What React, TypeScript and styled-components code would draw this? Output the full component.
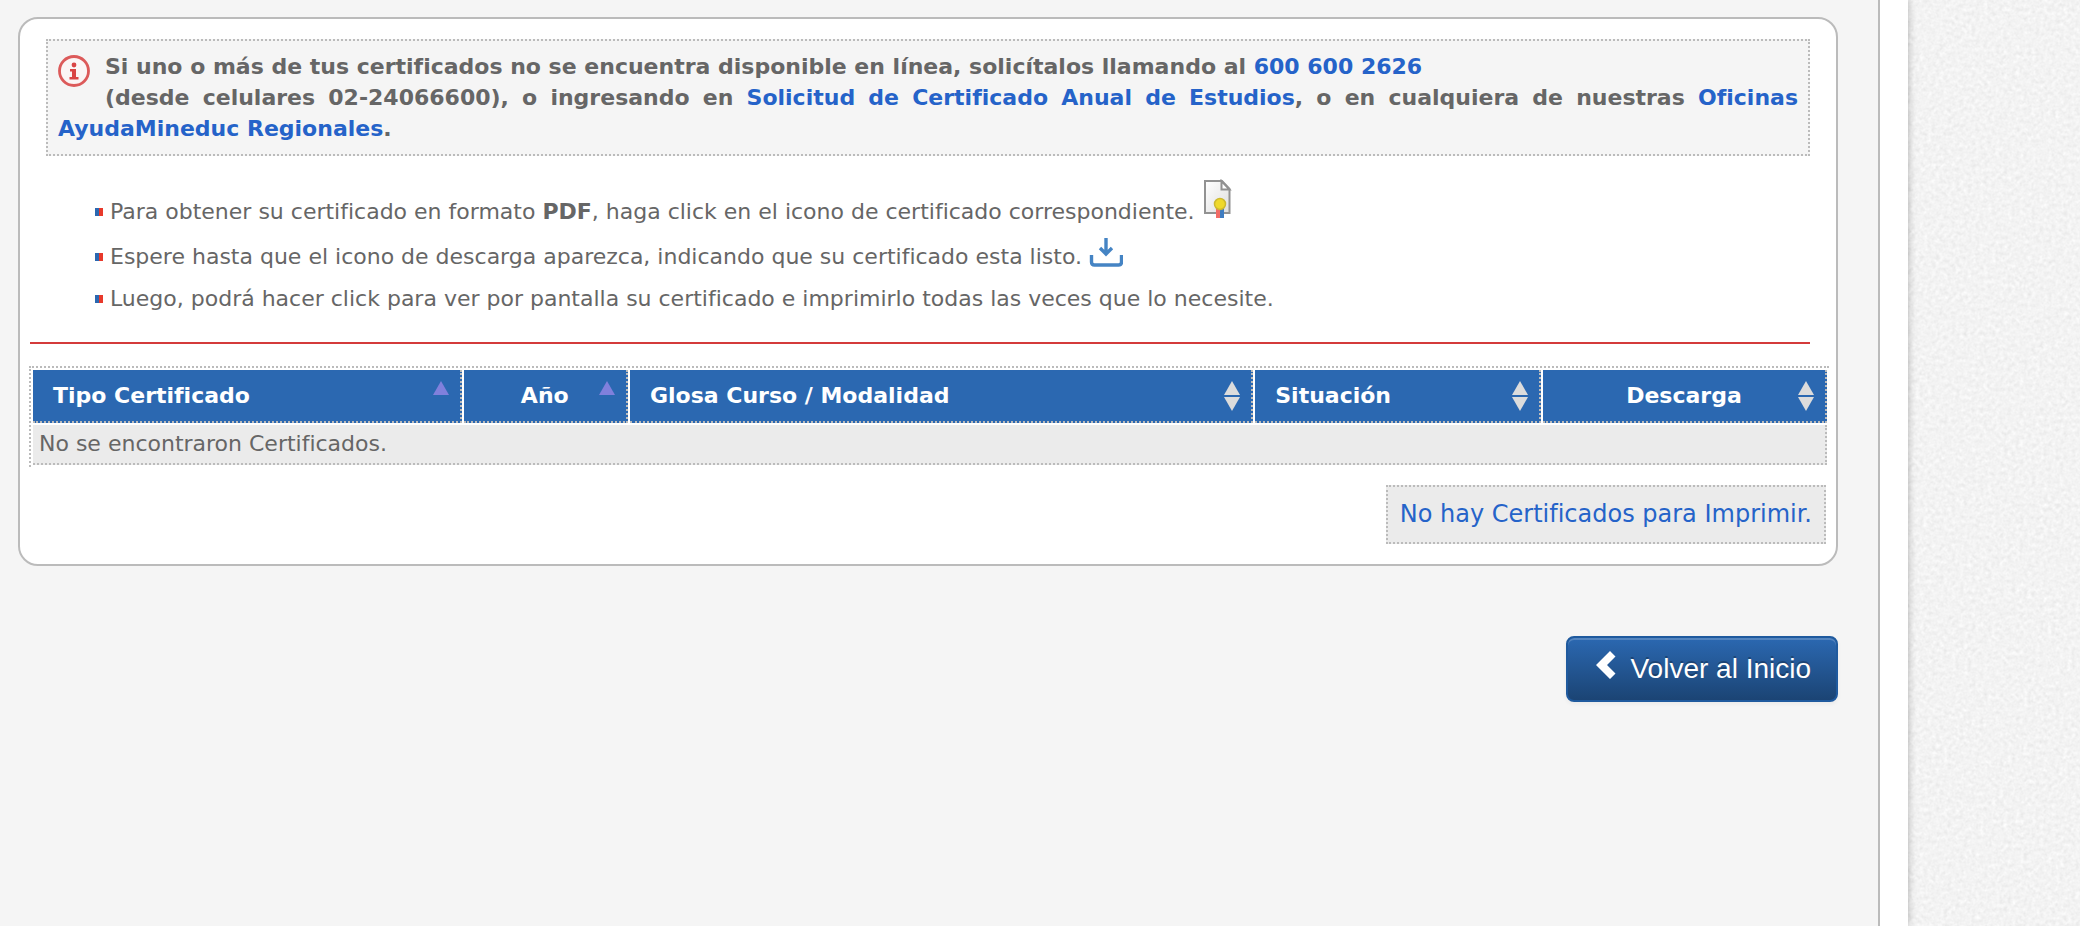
import React from 'react';
import styled, { createGlobalStyle, css } from 'styled-components';

const line = '#bbbbbb';
const ink = '#666666';
const link = '#2563c9';
const sans = 'Verdana, "DejaVu Sans", sans-serif';

const GlobalStyle = createGlobalStyle`
  *, *::before, *::after { box-sizing: border-box; }
  body {
    margin: 0;
    background: #f3f3f3;
    color: ${ink};
    font-family: ${sans};
    font-size: 22px;
    line-height: 31px;
    font-variant-ligatures: none;
  }
`;

const Page = styled.div`
  display: flex;
  min-height: 100vh;
  overflow: hidden;
`;

const Sheet = styled.div`
  position: relative;
  z-index: 1;
  flex: 1;
  min-width: 0;
  display: flex;
  padding-right: 28px;
  background: #ffffff;
  box-shadow: 0 0 8px rgba(0, 0, 0, 0.3);
`;

const Gutter = styled.div`
  flex: 0 0 172px;
  display: flex;
`;

const Texture = styled.svg`
  display: block;
  width: 100%;
  height: auto;
`;

const Content = styled.main`
  flex: 1;
  min-width: 0;
  padding: 17px 40px 0 18px;
  border-right: 2px solid ${line};
  background: #f5f5f5;
`;

const Panel = styled.section`
  padding: 20px 7px 20px 9px;
  border: 2px solid ${line};
  border-radius: 20px;
  background: #ffffff;
`;

const Notice = styled.div`
  margin: 0 19px 0 17px;
  padding: 10px;
  border: 2px dotted ${line};
  background: #f5f5f5;
  font-weight: bold;
  text-align: justify;
`;

const InfoIcon = styled.svg`
  float: left;
  width: 32px;
  height: 32px;
  margin: 4px 15px 0 0;
`;

const Link = styled.a`
  color: ${link};
  text-decoration: none;
`;

const Steps = styled.ul`
  list-style: none;
  margin: 23px 0 0;
  padding: 0 0 0 66px;
`;

const Step = styled.li`
  display: flex;
  align-items: flex-end;
  padding-bottom: 11px;

  &::before {
    content: '';
    width: 8px;
    height: 8px;
    margin: 0 7px 11px 0;
    background: linear-gradient(90deg, #2b68b1 50%, #e8392b 50%);
  }
`;

const CertificateIcon = styled.svg`
  flex: none;
  width: 34px;
  height: 40px;
  margin: 0 0 8px 6px;
`;

const DownloadIcon = styled.svg`
  flex: none;
  width: 34px;
  height: 34px;
  margin-left: 7px;
`;

const Rule = styled.hr`
  height: 2px;
  margin: 17px 19px 22px 1px;
  border: 0;
  background: #d43b3b;
`;

const Table = styled.table`
  width: 100%;
  table-layout: fixed;
  border-collapse: separate;
  border-spacing: 2px;
  border-top: 2px dotted ${line};
  border-left: 2px dotted ${line};
`;

const cell = css`
  padding: 0;
  border-right: 2px dotted ${line};
  border-bottom: 2px dotted ${line};
`;

const HeadCell = styled.th<{ $width: string }>`
  ${cell}
  width: ${(p) => p.$width};
  background: #2b68b1;
`;

const SortButton = styled.button<{ $center?: boolean }>`
  display: flex;
  align-items: center;
  width: 100%;
  height: 51px;
  padding: 0 10px 0 ${(p) => (p.$center ? 28 : 20)}px;
  border: 0;
  background: transparent;
  color: #ffffff;
  font: bold 22px/31px ${sans};
  font-variant-ligatures: none;

  span {
    flex: 1;
    text-align: ${(p) => (p.$center ? 'center' : 'left')};
  }
`;

const EmptyCell = styled.td`
  ${cell}
  padding: 3px 6px 4px;
  background: #ebebeb;
`;

const Printing = styled.div`
  display: flex;
  justify-content: flex-end;
  margin: 18px 3px 0 0;
`;

const PrintStatus = styled.div`
  padding: 12px;
  border: 2px dotted ${line};
  background: #ebebeb;
  color: ${link};
  font-size: 24px;
`;

const Actions = styled.div`
  display: flex;
  justify-content: flex-end;
  margin-top: 70px;
`;

const BackButton = styled.button`
  display: flex;
  align-items: center;
  gap: 14px;
  height: 66px;
  padding: 0 25px 0 28px;
  border: 2px solid #1f5a9e;
  border-radius: 8px;
  background: linear-gradient(#2b68b1, #1b4474);
  box-shadow: inset 0 2px 0 rgba(255, 255, 255, 0.2), 0 2px 4px rgba(0, 0, 0, 0.05);
  color: #ffffff;
  font: 28px/40px "Liberation Sans", Arial, sans-serif;
  text-shadow: 0 -2px 0 rgba(0, 0, 0, 0.25);
`;

const BackIcon = styled.svg`
  width: 20px;
  height: 28px;
  margin-bottom: 8px;
`;

type Sort = 'asc' | 'both';

function SortIcon({ sort }: { sort: Sort }) {
  return (
    <svg width="18" height="30" viewBox="0 0 18 30" aria-hidden="true">
      {sort === 'asc' ? (
        <path d="M9 0L17 14H1z" fill="#8080dc" />
      ) : (
        <>
          <path d="M9 0L17 14H1z" fill="#dcdcdc" />
          <path d="M9 30L17 16H1z" fill="#dcdcdc" />
        </>
      )}
    </svg>
  );
}

const columns: { label: string; width: string; sort: Sort; center?: boolean }[] = [
  { label: 'Tipo Certificado', width: '24%', sort: 'asc' },
  { label: 'Año', width: '9.2%', sort: 'asc', center: true },
  { label: 'Glosa Curso / Modalidad', width: '34.9%', sort: 'both' },
  { label: 'Situación', width: '16%', sort: 'both' },
  { label: 'Descarga', width: '15.9%', sort: 'both', center: true },
];

export default function App() {
  return (
    <>
      <GlobalStyle />
      <Page>
        <Sheet>
          <Content>
            <Panel>
              <Notice>
                <InfoIcon viewBox="0 0 32 32" aria-hidden="true">
                  <circle cx="16" cy="16" r="14.500" fill="#fbf5f5" stroke="#dc5a5a" strokeWidth="2.800" />
                  <circle cx="16" cy="10" r="2.400" fill="#d94444" />
                  <path d="M12 14h6v8h2.500v2.500h-9V22H14v-5.500h-2z" fill="#d94444" />
                </InfoIcon>
                Si uno o más de tus certificados no se encuentra disponible en línea, solicítalos llamando al{' '}
                <Link href="tel:6006002626">600 600 2626</Link>
                <br />
                (desde celulares 02-24066600), o ingresando en{' '}
                <Link href="#solicitud">Solicitud de Certificado Anual de Estudios</Link>, o en cualquiera de
                nuestras <Link href="#oficinas">Oficinas AyudaMineduc Regionales</Link>.
              </Notice>

              <Steps>
                <Step>
                  <span>
                    Para obtener su certificado en formato <b>PDF</b>, haga click en el icono de certificado
                    correspondiente.
                  </span>
                  <CertificateIcon viewBox="1 0 34 40" aria-hidden="true">
                    <defs>
                      <linearGradient id="paper" x1="0" y1="0" x2="1" y2="1">
                        <stop offset="0" stopColor="#ffffff" />
                        <stop offset="1" stopColor="#dedede" />
                      </linearGradient>
                    </defs>
                    <path d="M5 2h17l7.500 8v24H5z" fill="url(#paper)" stroke="#929292" strokeWidth="2" />
                    <path d="M21.500 2v8.500h8z" fill="#ffffff" stroke="#929292" strokeWidth="2" />
                    <path d="M16 28h4v11h-4z" fill="#f26b66" />
                    <path d="M20 28h4v11h-4z" fill="#3f7cc0" />
                    <circle cx="20" cy="25" r="5.500" fill="#efd92b" stroke="#cdb930" strokeWidth="1.500" />
                  </CertificateIcon>
                </Step>
                <Step>
                  <span>
                    Espere hasta que el icono de descarga aparezca, indicando que su certificado esta listo.
                  </span>
                  <DownloadIcon viewBox="0 0 34 34" aria-hidden="true">
                    <path
                      d="M2.500 17v7q0 3 3 3h24q3 0 3-3v-7M17 0v15M11 10l6 6 6-6"
                      fill="none"
                      stroke="#4584c4"
                      strokeWidth="3.400"
                    />
                  </DownloadIcon>
                </Step>
                <Step>
                  <span>
                    Luego, podrá hacer click para ver por pantalla su certificado e imprimirlo todas las veces que
                    lo necesite.
                  </span>
                </Step>
              </Steps>

              <Rule />

              <Table>
                <thead>
                  <tr>
                    {columns.map((c) => (
                      <HeadCell key={c.label} $width={c.width} scope="col">
                        <SortButton type="button" $center={c.center}>
                          <span>{c.label}</span>
                          <SortIcon sort={c.sort} />
                        </SortButton>
                      </HeadCell>
                    ))}
                  </tr>
                </thead>
                <tbody>
                  <tr>
                    <EmptyCell colSpan={columns.length}>No se encontraron Certificados.</EmptyCell>
                  </tr>
                </tbody>
              </Table>

              <Printing>
                <PrintStatus>No hay Certificados para Imprimir.</PrintStatus>
              </Printing>
            </Panel>

            <Actions>
              <BackButton type="button">
                <BackIcon viewBox="0 0 20 28" aria-hidden="true">
                  <path d="M14 0l5.500 5.500L11 14l8.500 8.500L14 28 0 14z" fill="#ffffff" />
                </BackIcon>
                Volver al Inicio
              </BackButton>
            </Actions>
          </Content>
        </Sheet>
        <Gutter>
          <Texture aria-hidden="true">
            <filter id="grain" x="0" y="0" width="100%" height="100%" colorInterpolationFilters="sRGB">
              <feTurbulence type="fractalNoise" baseFrequency="0.25" numOctaves="3" />
              <feColorMatrix
                type="matrix"
                values="0.07 0.07 0 0 0.882  0.07 0.07 0 0 0.882  0.07 0.07 0 0 0.882  0 0 0 0 1"
              />
            </filter>
            <rect width="100%" height="100%" filter="url(#grain)" />
          </Texture>
        </Gutter>
      </Page>
    </>
  );
}
